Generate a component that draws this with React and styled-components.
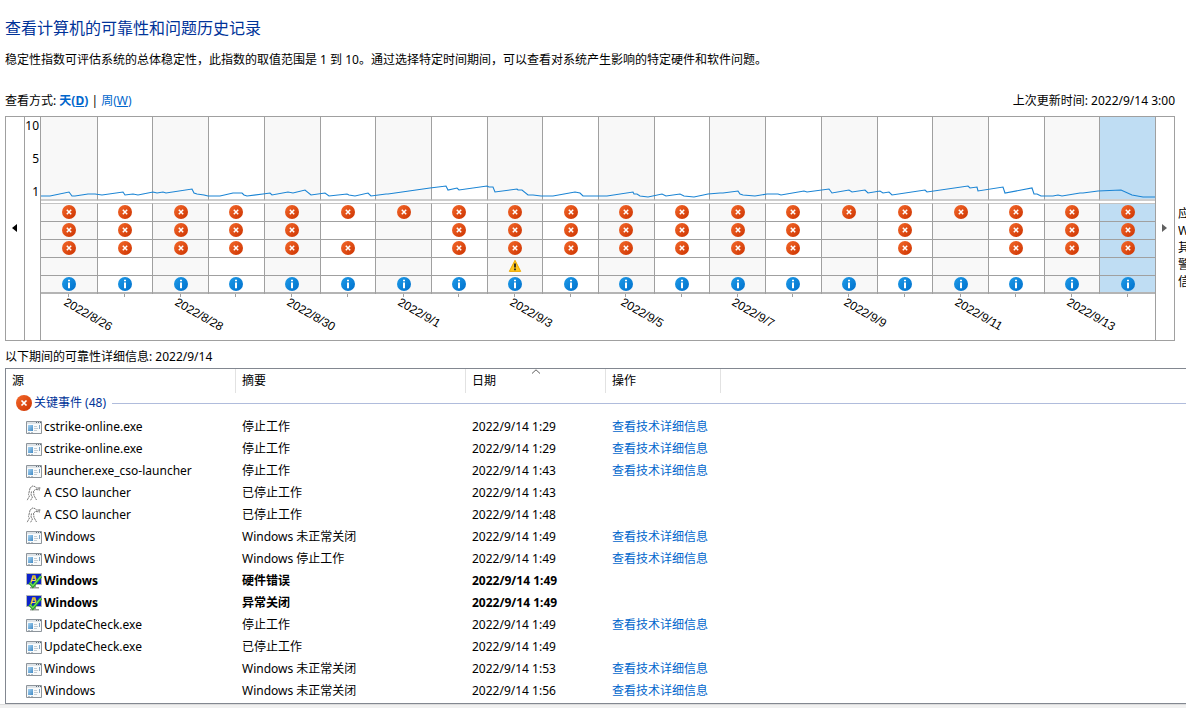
import React from 'react';
import styled, { createGlobalStyle, css } from 'styled-components';

const GlobalStyle = createGlobalStyle`
  *, *::before, *::after { box-sizing: border-box; }
  body {
    margin: 0;
    background: #fff;
    color: #000;
    font: 12px/20px "Noto Sans", "Noto Sans CJK SC", sans-serif;
    overflow-x: hidden;
  }
`;

const line = '#a0a0a0';

const Page = styled.main`
  padding-top: 16px;
`;

const Title = styled.h1`
  margin: 0 5px 10px;
  color: #003399;
  font-size: 16px;
  font-weight: 400;
  line-height: 24px;
`;

const Intro = styled.p`
  margin: 0 5px 21px;
`;

const Toolbar = styled.div`
  display: flex;
  justify-content: space-between;
  padding: 0 11px 0 5px;
  margin-bottom: 5px;
`;

const ViewLink = styled.a`
  color: #0066cc;
  text-decoration: none;
  font-weight: ${(p) => (p.$active ? 700 : 400)};
`;

const Key = styled.span`
  text-decoration: underline;
`;

const ChartRow = styled.section`
  display: flex;
  gap: 3px;
  padding-left: 5px;
`;

const Chart = styled.div`
  flex: 1;
  min-width: 0;
  display: flex;
  border: 1px solid ${line};
`;

const Scroller = styled.button`
  flex: none;
  width: 18px;
  padding: 0 2px 2px 0;
  border: 0;
  background: #fff;
  display: flex;
  align-items: center;
  justify-content: center;
  color: ${(p) => (p.$dim ? '#606060' : '#000')};
`;

const Axis = styled.div`
  flex: none;
  width: 15px;
  height: 84px;
  padding-right: 1px;
  display: flex;
  flex-direction: column;
  justify-content: space-between;
  text-align: right;
  line-height: 18px;
`;

const AxisColumn = styled.div`
  flex: none;
  border: solid ${line};
  border-width: 0 1px;
`;

const Plot = styled.div`
  flex: 1;
  min-width: 0;
  height: 223px;
  display: flex;
  position: relative;
  border-right: 1px solid ${line};
`;

const Trend = styled.svg`
  position: absolute;
  left: 0;
  top: 0;
  width: 100%;
  height: 84px;
  pointer-events: none;
`;

const Day = styled.div`
  flex: 1 1 0;
  min-width: 0;
  display: flex;
  flex-direction: column;
  align-items: stretch;
  --fill: ${(p) => (p.$selected ? '#bfddf3' : p.$shaded ? '#f8f8f8' : '#fff')};
  --edge: ${(p) => (p.$first ? '0' : '1px')};
`;

const DayPlot = styled.div`
  height: 84px;
  margin-bottom: 2px;
  background: var(--fill);
  border-left: var(--edge) solid ${line};
  border-bottom: 2px solid #cdcdcd;
`;

const Cells = styled.div`
  background: var(--fill);
  border-left: var(--edge) solid ${line};
  border-top: 1px solid #c4c4c4;
`;

const Cell = styled.div`
  height: 18px;
  padding-bottom: 1px;
  display: flex;
  align-items: center;
  justify-content: center;
  border-bottom: 1px solid ${line};
  &:last-child {
    padding-bottom: 0;
    border-bottom: 2px solid #b4b4b4;
  }
`;

const DayFoot = styled.div`
  display: flex;
  justify-content: center;
`;

const Tick = styled.span`
  width: 1px;
  height: 3px;
  background: ${line};
`;

const DateLabel = styled.time`
  width: 56px;
  margin: -4px 0 0 24px;
  font-family: "Liberation Sans", sans-serif;
  line-height: 16px;
  white-space: nowrap;
  transform: rotate(30deg);
  transform-origin: 0 50%;
`;

const Legend = styled.div`
  flex: none;
  width: 8px;
  padding-top: 89px;
  line-height: 17px;
  white-space: nowrap;
  overflow: hidden;
`;

const Caption = styled.p`
  margin: 6px 5px 1px;
`;

const TableFrame = styled.div`
  margin-left: 5px;
  padding-bottom: 1px;
  border: solid #828790;
  border-width: 1px 0 1px 1px;
`;

const Table = styled.table`
  width: 100%;
  table-layout: fixed;
  border-collapse: separate;
  border-spacing: 0;
`;

const Col = styled.col`
  width: ${(p) => (p.$w ? `${p.$w}px` : 'auto')};
`;

const Head = styled.th`
  position: relative;
  height: 24px;
  padding: 0 6px;
  text-align: left;
  font-weight: 400;
  border-right: ${(p) => (p.$last ? 0 : '1px solid #e2e2e2')};
`;

const SortMark = styled.svg`
  position: absolute;
  top: 0;
  left: 50%;
  transform: translateX(-50%);
`;

const GroupCell = styled.th`
  height: 23px;
  padding: 0 0 3px 10px;
  font-weight: 400;
  color: #003399;
`;

const GroupLine = styled.div`
  display: flex;
  align-items: center;
  gap: 2px;
  &::after {
    content: "";
    flex: 1;
    height: 1px;
    margin-left: 4px;
    background: #b0bcdc;
  }
`;

const Row = styled.tr`
  height: 22px;
  ${(p) => p.$bold && css`font-weight: 700;`}
`;

const Data = styled.td`
  padding: 0 6px;
  white-space: nowrap;
`;

const Source = styled.div`
  display: flex;
  align-items: center;
  gap: 2px;
  padding-left: 14px;
`;

const DetailLink = styled.a`
  color: #0066cc;
  text-decoration: none;
`;

const StatusStrip = styled.footer`
  height: 4px;
  background: #f0f0f0;
  border-top: 1px solid #dcdcdc;
`;

function ErrorIcon({ size = 14 }) {
  return (
    <svg width={size} height={size} viewBox="0 0 14 14" aria-label="错误">
      <circle cx="7" cy="7" r="7" fill="url(#errorFill)" />
      <path d="M4.8 4.8 9.2 9.2M9.2 4.8 4.8 9.2" stroke="#fff" strokeWidth="1.5" />
    </svg>
  );
}

function InfoIcon() {
  return (
    <svg width="14" height="14" viewBox="0 0 14 14" aria-label="信息">
      <circle cx="7" cy="7" r="7" fill="url(#infoFill)" />
      <path d="M6 2.8h2v1.5H6zM6 5.4h2v5.8H6z" fill="#fff" />
    </svg>
  );
}

function WarningIcon() {
  return (
    <svg width="14" height="14" viewBox="0 0 14 14" aria-label="警告">
      <path d="M7 1.3 12.7 12.4H1.3z" fill="#ffc81e" stroke="#eda800" strokeWidth="1" strokeLinejoin="round" />
      <path d="M6.1 4.6h1.8v4H6.1zM6.1 9.6h1.8v1.7H6.1z" fill="#222" />
    </svg>
  );
}

function AppIcon() {
  return (
    <svg width="16" height="16" viewBox="0 0 16 16" aria-hidden="true">
      <path d="M.5 2.5h15v12H.5z" fill="#f8fafb" stroke="#8d949b" />
      <path d="M1 3h14v2H1z" fill="#dfe4e8" />
      <path d="M10 3h1v1h-1zM12 3h1v1h-1zM14 3h1v1h-1z" fill="#5d6b78" />
      <path d="M2 6h5v6H2z" fill="url(#paneFill)" />
      <path d="M8 7.5h3M8 9.5h4M8 11.5h3" stroke="#c3ccd3" />
      <path d="M13 6h1v4h-1z" fill="#7fa3c2" />
      <path d="M2 13.500h2M5 13.500h2" stroke="#b4bec6" />
    </svg>
  );
}

function LauncherIcon() {
  return (
    <svg width="16" height="16" viewBox="0 0 16 16" aria-hidden="true" fill="none" stroke="#777" strokeWidth="1" strokeDasharray="2 .6">
      <path d="M4 3.500 6 1l3 .5 1 1.500h5M10 4.500l4 .5M13 2.500v2.500" />
      <path d="M4 3.500 2.500 9.500 3.500 11 1 15.500M9.500 4.500 7.500 6l.5 4.500 2.500 4.500" />
      <path d="M5.500 6.500 5 10l1.500 2L4.500 15.500" />
    </svg>
  );
}

function MonitorIcon() {
  return (
    <svg width="16" height="16" viewBox="0 0 16 16" aria-hidden="true">
      <path d="M.5.500h15v11H.5z" fill="#0c22cc" stroke="#b4b8b4" />
      <path d="M6 12h4v2H6zM4 14h9v1.500H4z" fill="#9a9e9a" />
      <path d="M5 9.500 7 3h1.800L10.500 9.500" fill="none" stroke="#e6c32c" strokeWidth="1.600" />
      <path d="M6 5h3M5.500 7.500h4.500" stroke="#f3dc62" />
      <path d="M3.500 9.500 6.800 13.300 15 3.200" fill="none" stroke="#2c9a2c" strokeWidth="2.800" />
      <path d="M3.800 9.600 6.800 12.800 14.800 3.400" fill="none" stroke="#6fe05a" strokeWidth="1.300" />
    </svg>
  );
}

const icons = { app: AppIcon, launcher: LauncherIcon, monitor: MonitorIcon };

const stability = [
  [0, 79], [9, 79], [28, 75], [31, 79], [34, 79], [47, 77], [54, 77], [61, 78], [82, 75], [84, 78], [92, 77], [97, 78],
  [112, 75], [116, 76], [122, 75], [125, 76], [151, 72], [153, 76], [156, 77], [163, 78], [167, 79], [179, 79], [192, 76],
  [201, 76], [203, 78], [206, 79], [222, 77], [229, 76], [231, 78], [247, 75], [252, 76], [264, 73], [270, 78], [284, 76],
  [288, 79], [306, 77], [308, 78], [314, 79], [327, 76], [330, 79], [345, 77], [347, 77], [389, 71], [405, 69], [407, 73],
  [416, 71], [418, 73], [446, 69], [448, 70], [452, 70], [454, 75], [476, 72], [477, 73], [481, 73], [487, 78], [492, 78],
  [500, 79], [512, 79], [534, 75], [539, 76], [542, 79], [566, 79], [592, 75], [593, 77], [596, 77], [599, 79], [607, 80],
  [621, 77], [625, 79], [639, 77], [643, 79], [653, 80], [667, 77], [679, 76], [682, 76], [697, 74], [699, 77], [702, 78],
  [714, 79], [726, 77], [737, 77], [740, 78], [763, 74], [766, 75], [788, 72], [791, 76], [808, 73], [811, 75], [824, 73],
  [827, 76], [839, 74], [842, 76], [848, 75], [851, 78], [884, 73], [886, 75], [927, 69], [929, 71], [936, 70], [937, 74],
  [962, 70], [964, 76], [991, 71], [993, 77], [996, 77], [1000, 79], [1012, 79], [1017, 78], [1021, 79], [1039, 76],
  [1042, 76], [1057, 74], [1080, 73], [1091, 78], [1102, 80], [1114, 80],
];

const E = 'error';
const eventsFor = (code) => [
  E,
  code & 1 ? E : null,
  code & 2 ? E : null,
  code & 4 ? 'warning' : null,
  'info',
];

const dates = [
  '2022/8/26', '2022/8/27', '2022/8/28', '2022/8/29', '2022/8/30', '2022/8/31', '2022/9/1', '2022/9/2', '2022/9/3', '2022/9/4',
  '2022/9/5', '2022/9/6', '2022/9/7', '2022/9/8', '2022/9/9', '2022/9/10', '2022/9/11', '2022/9/12', '2022/9/13', '2022/9/14',
];
const codes = [3, 3, 3, 3, 3, 2, 0, 3, 7, 3, 3, 3, 3, 3, 0, 3, 0, 3, 3, 3];
const days = dates.map((date, i) => ({ date, events: eventsFor(codes[i]) }));

const rows = [
  ['app', 'cstrike-online.exe', '停止工作', '1:29', true],
  ['app', 'cstrike-online.exe', '停止工作', '1:29', true],
  ['app', 'launcher.exe_cso-launcher', '停止工作', '1:43', true],
  ['launcher', 'A CSO launcher', '已停止工作', '1:43', false],
  ['launcher', 'A CSO launcher', '已停止工作', '1:48', false],
  ['app', 'Windows', 'Windows 未正常关闭', '1:49', true],
  ['app', 'Windows', 'Windows 停止工作', '1:49', true],
  ['monitor', 'Windows', '硬件错误', '1:49', false, true],
  ['monitor', 'Windows', '异常关闭', '1:49', false, true],
  ['app', 'UpdateCheck.exe', '停止工作', '1:49', true],
  ['app', 'UpdateCheck.exe', '已停止工作', '1:49', false],
  ['app', 'Windows', 'Windows 未正常关闭', '1:53', true],
  ['app', 'Windows', 'Windows 未正常关闭', '1:56', true],
];

function EventIcon({ kind }) {
  if (kind === 'error') return <ErrorIcon />;
  if (kind === 'warning') return <WarningIcon />;
  if (kind === 'info') return <InfoIcon />;
  return null;
}

const Defs = styled.svg`
  position: absolute;
`;

function SharedFills() {
  return (
    <Defs width="0" height="0" aria-hidden="true">
      <defs>
        <linearGradient id="errorFill" x1="0" y1="0" x2="1" y2="1">
          <stop offset="0" stopColor="#f4692b" />
          <stop offset="1" stopColor="#cc3300" />
        </linearGradient>
        <linearGradient id="infoFill" x1="0" y1="0" x2="1" y2="1">
          <stop offset="0" stopColor="#1e9be8" />
          <stop offset="1" stopColor="#0070cc" />
        </linearGradient>
        <linearGradient id="paneFill" x1="0" y1="0" x2="1" y2="1">
          <stop offset="0" stopColor="#a8d4f2" />
          <stop offset="1" stopColor="#3f88c4" />
        </linearGradient>
      </defs>
    </Defs>
  );
}

function StabilityChart() {
  return (
    <Chart>
      <Scroller type="button" aria-label="向前">
        <svg width="5" height="8" viewBox="0 0 5 8"><path d="M5 0v8L0 4z" fill="currentColor" /></svg>
      </Scroller>
      <AxisColumn>
        <Axis><span>10</span><span>5</span><span>1</span></Axis>
      </AxisColumn>
      <Plot>
        {days.map((day, i) => (
          <Day key={day.date} $first={i === 0} $shaded={i % 2 === 0} $selected={i === days.length - 1}>
            <DayPlot />
            <Cells>
              {day.events.map((kind, n) => <Cell key={n}><EventIcon kind={kind} /></Cell>)}
            </Cells>
            <DayFoot><Tick /></DayFoot>
            {i % 2 === 0 && <DateLabel>{day.date}</DateLabel>}
          </Day>
        ))}
        <Trend viewBox="0 0 1114 84" preserveAspectRatio="none" aria-hidden="true">
          <polyline points={stability.map((p) => p.join(',')).join(' ')} fill="none" stroke="#1a84d4" strokeWidth="1.100" />
        </Trend>
      </Plot>
      <Scroller type="button" aria-label="向后" $dim>
        <svg width="5" height="8" viewBox="0 0 5 8"><path d="M0 0v8l5-4z" fill="currentColor" /></svg>
      </Scroller>
    </Chart>
  );
}

function EventTable() {
  return (
    <TableFrame>
      <Table>
        <colgroup>
          <Col $w={230} /><Col $w={230} /><Col $w={140} /><Col $w={115} /><Col />
        </colgroup>
        <thead>
          <tr>
            <Head scope="col">源</Head>
            <Head scope="col">摘要</Head>
            <Head scope="col" aria-sort="ascending">
              日期
              <SortMark width="9" height="5" viewBox="0 0 9 5" aria-hidden="true">
                <path d="M.5 4.500 4.500.8 8.500 4.500" fill="none" stroke="#606060" />
              </SortMark>
            </Head>
            <Head scope="col">操作</Head>
            <Head as="td" $last />
          </tr>
        </thead>
        <tbody>
          <tr>
            <GroupCell colSpan={5} scope="colgroup">
              <GroupLine><ErrorIcon size={16} />关键事件 (48)</GroupLine>
            </GroupCell>
          </tr>
          {rows.map(([icon, source, summary, time, link, bold], i) => {
            const Icon = icons[icon];
            return (
              <Row key={i} $bold={bold}>
                <Data><Source><Icon />{source}</Source></Data>
                <Data>{summary}</Data>
                <Data>2022/9/14 {time}</Data>
                <Data>{link && <DetailLink href="#details">查看技术详细信息</DetailLink>}</Data>
                <Data />
              </Row>
            );
          })}
        </tbody>
      </Table>
    </TableFrame>
  );
}

export default function App() {
  return (
    <>
      <GlobalStyle />
      <SharedFills />
      <Page>
        <Title>查看计算机的可靠性和问题历史记录</Title>
        <Intro>稳定性指数可评估系统的总体稳定性，此指数的取值范围是 1 到 10。通过选择特定时间期间，可以查看对系统产生影响的特定硬件和软件问题。</Intro>
        <Toolbar>
          <span>
            查看方式: <ViewLink href="#day" $active>天(<Key>D</Key>)</ViewLink> | <ViewLink href="#week">周(<Key>W</Key>)</ViewLink>
          </span>
          <span>上次更新时间: 2022/9/14 3:00</span>
        </Toolbar>
        <ChartRow>
          <StabilityChart />
          <Legend>
            <div>应用程序故障</div>
            <div>Windows 故障</div>
            <div>其他故障</div>
            <div>警告</div>
            <div>信息</div>
          </Legend>
        </ChartRow>
        <Caption>以下期间的可靠性详细信息: 2022/9/14</Caption>
        <EventTable />
      </Page>
      <StatusStrip />
    </>
  );
}
